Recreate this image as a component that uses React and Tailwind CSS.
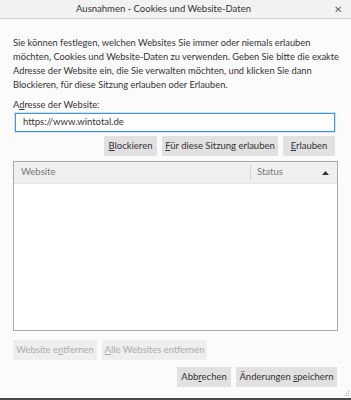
import React from "react";

const font = { fontFamily: 'Lato, "Liberation Sans", sans-serif' };

function Btn({ children, className = "", disabled = false }) {
  return (
    <div
      className={`h-[20px] flex items-center justify-center text-[9.5px] whitespace-nowrap ${disabled ? "bg-[#efefef] text-[#ababab]" : "bg-[#e1e1e1] text-[#333]"} ${className}`}
    >
      <span>{children}</span>
    </div>
  );
}

export default function App() {
  return (
    <div className="w-[351px] h-[400px] bg-[#fbfbfb] flex flex-col overflow-hidden relative" style={font}>
      <div className="h-[19px] bg-[#f2f2f2] border-b border-[#d4d4d4] flex items-center relative shrink-0">
        <div className="flex-1 text-center text-[9.5px] text-[#333] pr-[24px]">Ausnahmen - Cookies und Website-Daten</div>
        <div className="absolute right-[9px] top-[2px] text-[10px] text-[#666]">✕</div>
      </div>
      <div className="pl-[13px] pt-[17px] text-[9.3px] leading-[14px] text-[#333] whitespace-nowrap">
        <div>Sie können festlegen, welchen Websites Sie immer oder niemals erlauben</div>
        <div>möchten, Cookies und Website-Daten zu verwenden. Geben Sie bitte die exakte</div>
        <div>Adresse der Website ein, die Sie verwalten möchten, und klicken Sie dann</div>
        <div>Blockieren, für diese Sitzung erlauben oder Erlauben.</div>
      </div>
      <div className="px-[13px] mt-[6px] text-[9.3px] leading-[14px] text-[#333]">
        A<span className="underline">d</span>resse der Website:
      </div>
      <div className="ml-[15px] mr-[16px] mt-[1px] h-[19px] border border-[#3c95e6] bg-white flex items-center px-[7px] text-[9.5px] text-[#333] shadow-[0_0_0_1px_#cfe4f8]">
        https://www.wintotal.de
      </div>
      <div className="flex justify-end gap-[5px] mr-[16px] mt-[4px]">
        <Btn className="w-[53px]"><span className="underline">B</span>lockieren</Btn>
        <Btn className="w-[116px]"><span className="underline">F</span>ür diese Sitzung erlauben</Btn>
        <Btn className="w-[52px]"><span className="underline">E</span>rlauben</Btn>
      </div>
      <div className="mx-[13px] mt-[5px] h-[170px] border border-[#a9a9a9] bg-white flex flex-col">
        <div className="h-[22px] bg-[#f0f0f0] border-b border-[#e5e5e5] flex items-center text-[9.5px] text-[#777]">
          <div className="w-[237px] pl-[7px] h-[15px] flex items-center border-r border-[#d0d0d0]">Website</div>
          <div className="flex-1 pl-[6px] flex items-center justify-between pr-[8px]">
            <span>Status</span>
            <svg width="7" height="4" viewBox="0 0 7 4"><path d="M0 4 L3.5 0 L7 4 Z" fill="#333" /></svg>
          </div>
        </div>
      </div>
      <div className="flex gap-[5px] ml-[13px] mt-[9px]">
        <Btn disabled className="w-[84px]">Website e<span className="underline">n</span>tfernen</Btn>
        <Btn disabled className="w-[105px]"><span className="underline">A</span>lle Websites entfernen</Btn>
      </div>
      <div className="flex justify-end gap-[5px] mr-[14px] mt-[7px]">
        <Btn className="w-[54px]">Abb<span className="underline">r</span>echen</Btn>
        <Btn className="w-[101px]">Änderungen <span className="underline">s</span>peichern</Btn>
      </div>
      <div className="flex-1" />
      <svg className="absolute right-[1px] bottom-[3px]" width="7" height="7" viewBox="0 0 7 7">
        <rect x="5" y="1" width="1" height="1" fill="#aaa" />
        <rect x="3" y="3" width="1" height="1" fill="#aaa" />
        <rect x="5" y="3" width="1" height="1" fill="#aaa" />
        <rect x="1" y="5" width="1" height="1" fill="#aaa" />
        <rect x="3" y="5" width="1" height="1" fill="#aaa" />
        <rect x="5" y="5" width="1" height="1" fill="#aaa" />
      </svg>
      <div className="h-[2px] bg-[#4a4a4a] shrink-0" />
    </div>
  );
}
